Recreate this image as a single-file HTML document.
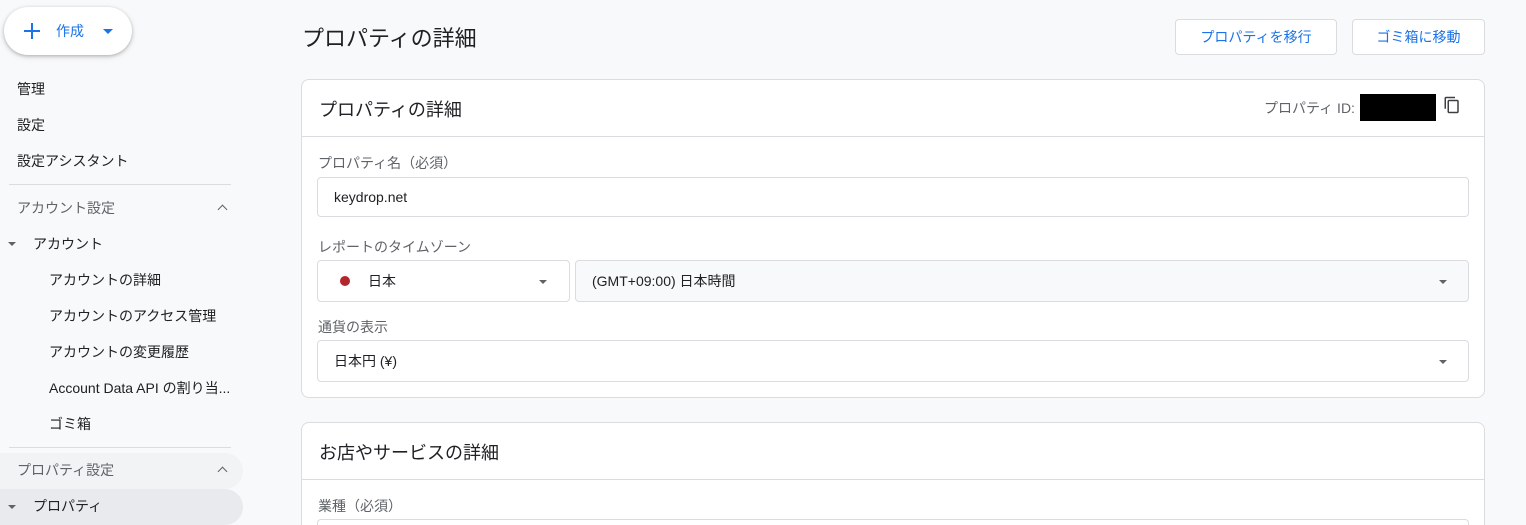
<!DOCTYPE html>
<html style="width:1526px;height:525px;overflow:hidden"><head><meta charset="utf-8"><style>
*{box-sizing:border-box;margin:0;padding:0}
body{width:1526px;height:525px;overflow:hidden;background:#f8f9fa;font-family:"Liberation Sans","Noto Sans CJK JP",sans-serif;color:#202124;position:relative}
.abs{position:absolute}
.nav{font-size:14px;color:#202124;white-space:nowrap}
.sec{font-size:14px;color:#5f6368}
.hr{position:absolute;left:9px;width:222px;height:1px;background:#dadce0}
.card{position:absolute;left:301px;width:1184px;background:#fff;border:1px solid #dadce0;border-radius:8px}
.lbl{position:absolute;font-size:14px;color:#5f6368}
.inp{position:absolute;border:1px solid #dadce0;border-radius:4px;background:#fff;font-size:14px;padding-left:16px;display:flex;align-items:center}
.tri{position:absolute;width:0;height:0;border-left:4px solid transparent;border-right:4px solid transparent;border-top:4px solid #5f6368}
.btn{position:absolute;top:19px;height:36px;border:1px solid #dadce0;border-radius:4px;background:#fff;color:#1a73e8;font-size:14px;display:flex;align-items:center;justify-content:center}
.chev{position:absolute;width:7px;height:7px;border-left:1.6px solid #5f6368;border-top:1.6px solid #5f6368;transform:rotate(45deg)}
</style></head><body>
<div class="abs" style="left:4px;top:7px;width:128px;height:48px;border-radius:24px;background:#fff;box-shadow:0 1px 3px rgba(60,64,67,.3),0 2px 6px rgba(60,64,67,.15)"></div>
<div class="abs" style="left:24px;top:30px;width:16px;height:2px;background:#1a73e8"></div>
<div class="abs" style="left:31px;top:23px;width:2px;height:16px;background:#1a73e8"></div>
<div class="abs" style="left:56px;top:21px;font-size:14px;color:#1a73e8">作成</div>
<div class="tri" style="left:103px;top:29px;border-left-width:5px;border-right-width:5px;border-top:5px solid #1a73e8"></div>

<div class="abs nav" style="left:17px;top:79px">管理</div>
<div class="abs nav" style="left:17px;top:115px">設定</div>
<div class="abs nav" style="left:17px;top:151px">設定アシスタント</div>
<div class="hr" style="top:184px"></div>
<div class="abs sec" style="left:17px;top:198px">アカウント設定</div>
<div class="chev" style="left:219px;top:206px"></div>
<div class="tri" style="left:8px;top:242px"></div>
<div class="abs nav" style="left:33px;top:234px">アカウント</div>
<div class="abs nav" style="left:49px;top:270px">アカウントの詳細</div>
<div class="abs nav" style="left:49px;top:306px">アカウントのアクセス管理</div>
<div class="abs nav" style="left:49px;top:342px">アカウントの変更履歴</div>
<div class="abs nav" style="left:49px;top:378px">Account Data API の割り当...</div>
<div class="abs nav" style="left:49px;top:414px">ゴミ箱</div>
<div class="hr" style="top:447px"></div>
<div class="abs" style="left:0;top:453px;width:243px;height:36px;background:#f1f3f4;border-radius:0 18px 18px 0"></div>
<div class="abs sec" style="left:17px;top:460px">プロパティ設定</div>
<div class="chev" style="left:219px;top:468px"></div>
<div class="abs" style="left:0;top:489px;width:243px;height:36px;background:#e8eaed;border-radius:0 18px 18px 0"></div>
<div class="tri" style="left:8px;top:505px"></div>
<div class="abs nav" style="left:33px;top:496px">プロパティ</div>

<div class="abs" style="left:302px;top:21px;font-size:22px;color:#202124">プロパティの詳細</div>
<div class="btn" style="left:1175px;width:162px">プロパティを移行</div>
<div class="btn" style="left:1352px;width:133px">ゴミ箱に移動</div>

<div class="card" style="top:79px;height:319px">
 <div class="abs" style="left:17px;top:16px;font-size:18px">プロパティの詳細</div>
 <div class="abs" style="left:962px;top:18px;font-size:14px;color:#5f6368">プロパティ ID:</div>
 <div class="abs" style="left:1058px;top:14px;width:76px;height:27px;background:#000"></div>
 <svg class="abs" style="left:1141px;top:16px" width="18" height="18" viewBox="0 0 24 24"><path d="M16 1H4c-1.1 0-2 .9-2 2v14h2V3h12V1zm3 4H8c-1.1 0-2 .9-2 2v14c0 1.1.9 2 2 2h11c1.1 0 2-.9 2-2V7c0-1.1-.9-2-2-2zm0 16H8V7h11v14z" fill="#3c4043"/></svg>
 <div class="abs" style="left:0;top:56px;width:1182px;height:1px;background:#dadce0"></div>
 <div class="lbl" style="left:16px;top:73px">プロパティ名（必須）</div>
 <div class="inp" style="left:15px;top:97px;width:1152px;height:40px">keydrop.net</div>
 <div class="lbl" style="left:16px;top:157px">レポートのタイムゾーン</div>
 <div class="inp" style="left:15px;top:180px;width:253px;height:42px;padding-left:22px"><span style="width:10px;height:10px;border-radius:50%;background:#b3262e;display:inline-block;margin-right:18px"></span>日本</div>
 <div class="tri" style="left:237px;top:200px"></div>
 <div class="inp" style="left:273px;top:180px;width:894px;height:42px;background:#f8f9fa">(GMT+09:00) 日本時間</div>
 <div class="tri" style="left:1137px;top:200px"></div>
 <div class="lbl" style="left:16px;top:237px">通貨の表示</div>
 <div class="inp" style="left:15px;top:260px;width:1152px;height:42px">日本円 (¥)</div>
 <div class="tri" style="left:1137px;top:280px"></div>
</div>

<div class="card" style="top:422px;height:120px">
 <div class="abs" style="left:17px;top:16px;font-size:18px">お店やサービスの詳細</div>
 <div class="abs" style="left:0;top:56px;width:1182px;height:1px;background:#dadce0"></div>
 <div class="lbl" style="left:16px;top:73px">業種（必須）</div>
 <div class="inp" style="left:15px;top:96px;width:1152px;height:40px"></div>
</div>
</body></html>
